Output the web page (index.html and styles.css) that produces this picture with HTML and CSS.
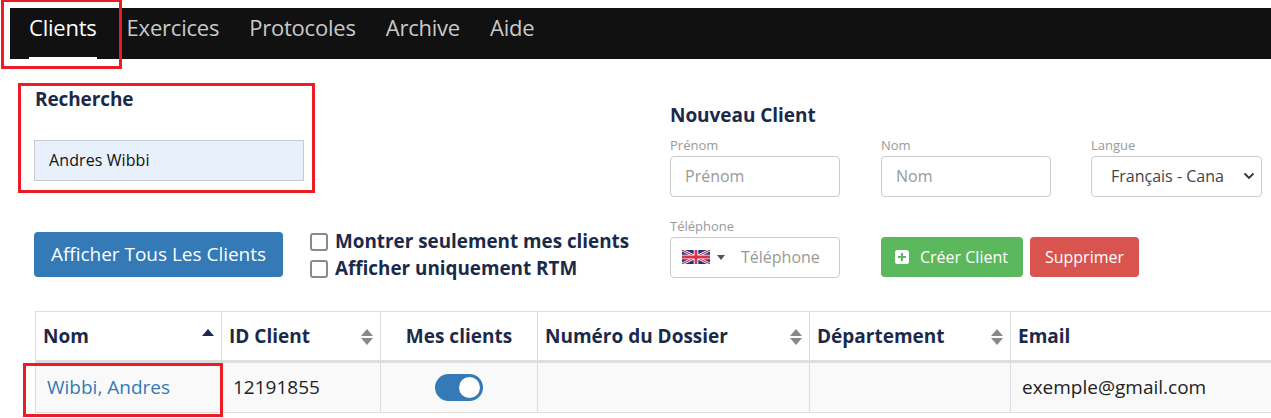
FILE: index.html
```
<!DOCTYPE html>
<html lang="fr">
<head>
<meta charset="utf-8">
<title>Clients</title>
<link rel="stylesheet" href="styles.css">
</head>
<body>
<div class="page">
  <nav class="navbar">
    <a class="nav-item active">Clients</a>
    <a class="nav-item">Exercices</a>
    <a class="nav-item">Protocoles</a>
    <a class="nav-item">Archive</a>
    <a class="nav-item">Aide</a>
  </nav>
  <div class="forms">
    <div class="left">
      <h4 class="search-title">Recherche</h4>
      <input class="search-input" type="text" value="Andres Wibbi">
      <div class="actions">
        <button class="btn btn-blue btn-all">Afficher Tous Les Clients</button>
        <div class="checks">
          <label class="check"><span class="box"></span>Montrer seulement mes clients</label>
          <label class="check"><span class="box"></span>Afficher uniquement RTM</label>
        </div>
      </div>
    </div>
    <div class="right">
      <h4 class="new-title">Nouveau Client</h4>
      <div class="field-row">
        <div class="field">
          <label class="field-label">Prénom</label>
          <input class="text-input" type="text" placeholder="Prénom">
        </div>
        <div class="field">
          <label class="field-label">Nom</label>
          <input class="text-input" type="text" placeholder="Nom">
        </div>
        <div class="field field-lang">
          <label class="field-label">Langue</label>
          <div class="select"><span class="select-text">Français - Cana</span>
            <svg class="chevron" width="12" height="8" viewBox="0 0 12 8"><path d="M1.5 1.5 6 6l4.5-4.5" fill="none" stroke="#333" stroke-width="1.8"/></svg>
          </div>
        </div>
      </div>
      <div class="field-row row-two">
        <div class="field">
          <label class="field-label">Téléphone</label>
          <div class="tel">
            <svg class="flag" width="28" height="14" viewBox="0 0 60 30">
              <rect width="60" height="30" fill="#27337f"/>
              <path d="M0 0 60 30M60 0 0 30" stroke="#fff" stroke-width="6"/>
              <path d="M0 0 60 30M60 0 0 30" stroke="#d8324a" stroke-width="2.5"/>
              <path d="M30 0v30M0 15h60" stroke="#fff" stroke-width="10"/>
              <path d="M30 0v30M0 15h60" stroke="#d8324a" stroke-width="6"/>
            </svg>
            <span class="caret"></span>
            <span class="tel-ph">Téléphone</span>
          </div>
        </div>
        <div class="buttons">
          <button class="btn btn-green">
            <svg width="14" height="14" viewBox="0 0 14 14"><rect width="14" height="14" rx="2.5" fill="#fff"/><path d="M7 3v8M3 7h8" stroke="#5cb85c" stroke-width="2.2"/></svg>
            Créer Client
          </button>
          <button class="btn btn-red">Supprimer</button>
        </div>
      </div>
    </div>
  </div>
  <table class="table">
    <thead>
      <tr>
        <th class="c1">Nom<span class="sort only-up"></span></th>
        <th class="c2">ID Client<span class="sort"></span></th>
        <th class="c3 center">Mes clients</th>
        <th class="c4">Numéro du Dossier<span class="sort"></span></th>
        <th class="c5">Département<span class="sort"></span></th>
        <th class="c6">Email</th>
      </tr>
    </thead>
    <tbody>
      <tr>
        <td class="link">Wibbi, Andres</td>
        <td>12191855</td>
        <td class="center"><span class="toggle"><span class="knob"></span></span></td>
        <td></td>
        <td></td>
        <td>exemple@gmail.com</td>
      </tr>
    </tbody>
  </table>
  <div class="mark mark-nav"></div>
  <div class="mark mark-search"></div>
  <div class="mark mark-row"></div>
</div>
</body>
</html>
```
FILE: styles.css
```
* { box-sizing: border-box; }
html, body { margin: 0; padding: 0; background: #fff; }
body { font-family: "Open Sans", "Noto Sans", sans-serif; color: #1b2a4a; }
.page { position: relative; width: 1271px; height: 418px; overflow: hidden; padding-top: 8px; }

.navbar { display: flex; height: 51px; margin-left: 10px; padding-left: 19px; gap: 30px; background: #111; }
.nav-item { height: 51px; padding-top: 4px; font-size: 22px; line-height: 30px; letter-spacing: -0.22px; color: #c9c9c9; }
.nav-item.active { color: #fff; border-bottom: 2px solid #fff; }

.forms { display: flex; height: 252px; }
.left { width: 670px; padding-left: 34px; }
.search-title { margin: 0; padding-top: 28px; padding-left: 1px; font-size: 19px; line-height: 24px; font-weight: 700; letter-spacing: -0.1px; color: #1b2a4a; }
.search-input { display: block; width: 270px; height: 41px; margin-top: 29px; padding: 0 14px 2px; border: 1px solid #c8ccd2; background: #e8f0fb; font: 16px "Open Sans", sans-serif; color: #111; letter-spacing: 0.1px; outline: 0; }
.actions { display: flex; margin-top: 51px; gap: 27px; }
.btn { border: 1px solid transparent; border-radius: 4px; color: #fff; font-family: "Open Sans", sans-serif; cursor: pointer; }
.btn-blue { width: 249px; height: 45px; padding: 0 0 2px; background: #337ab7; font-size: 19px; letter-spacing: -0.02px; }
.checks { display: flex; flex-direction: column; margin-top: -4px; }
.check { display: flex; align-items: center; height: 27px; font-size: 18.85px; font-weight: 700; line-height: 27px; color: #1b2a4a; }
.box { width: 18px; height: 18px; margin-right: 7px; border: 2px solid #8a8a8a; border-radius: 3px; background: #fff; }

.right { padding-top: 44px; }
.new-title { margin: 0; font-size: 19px; line-height: 24px; font-weight: 700; letter-spacing: -0.05px; color: #1b2a4a; }
.field-row { display: flex; gap: 41px; margin-top: 10px; }
.field { width: 170px; }
.field-lang { margin-left: -1px; }
.field-label { display: block; height: 17px; font-size: 13px; line-height: 17px; color: #9a9a9a; font-weight: 400; }
.text-input { display: block; width: 170px; height: 41px; margin-top: 2px; padding: 0 14px 2px; border: 1px solid #ccc; border-radius: 4px; font: 16px "Open Sans", sans-serif; outline: 0; }
.text-input::placeholder { color: #999; opacity: 1; }
.select { display: flex; align-items: center; justify-content: space-between; width: 171px; height: 41px; margin-top: 2px; padding: 0 6px 2px 19px; border: 1px solid #ccc; border-radius: 4px; font-size: 16px; color: #444; }
.row-two { margin-top: 21px; }
.tel { display: flex; align-items: center; height: 41px; margin-top: 2px; padding: 0 0 1px 11px; border: 1px solid #ccc; border-radius: 4px; }
.flag { flex: none; filter: blur(0.3px); }
.caret { width: 0; height: 0; margin-left: 7px; border: 4px solid transparent; border-top: 5px solid #555; border-bottom: 0; }
.tel-ph { margin-left: 16px; font-size: 16px; color: #999; }
.buttons { display: flex; gap: 7px; padding-top: 19px; }
.btn-green { display: flex; align-items: center; gap: 11px; width: 142px; height: 40px; padding: 0 0 0 13px; background: #5cb85c; font-size: 16px; }
.btn-red { width: 109px; height: 40px; padding: 0; background: #d9534f; font-size: 16px; }

.table { table-layout: fixed; width: 1236px; margin-left: 35px; border-collapse: collapse; border-top: 1px solid #ddd; }
.table th, .table td { border: 1px solid #ddd; }
.table th { position: relative; height: 50px; padding: 0 7px; border-bottom: 3px solid #ddd; font-size: 19px; font-weight: 700; line-height: 24px; text-align: left; color: #1b2a4a; }
.table td { height: 51px; padding: 0 11px 2px; background: #f9f9f9; font-size: 19px; color: #222; }
.table td.link { color: #337ab7; }
.table .center { text-align: center; }
.c1 { width: 186px; } .c2 { width: 159px; } .c3 { width: 157px; } .c4 { width: 272px; } .c5 { width: 201px; } .c6 { width: 261px; }
.sort { position: absolute; right: 7px; top: 17px; width: 0; height: 0; border-left: 6px solid transparent; border-right: 6px solid transparent; border-bottom: 7px solid #888; }
.sort::after { content: ""; position: absolute; left: -6px; top: 9px; border-left: 6px solid transparent; border-right: 6px solid transparent; border-top: 7px solid #888; }
.sort.only-up { top: 17px; border-bottom-color: #1b2a4a; }
.sort.only-up::after { display: none; }
.toggle { display: inline-flex; align-items: center; justify-content: flex-end; vertical-align: middle; width: 48px; height: 27px; padding-right: 3px; border-radius: 14px; background: #337ab7; }
.knob { width: 21px; height: 21px; border-radius: 50%; background: #fff; }

.mark { position: absolute; border: 3px solid #ed1c24; }
.mark-nav { left: 1px; top: -1px; width: 121px; height: 70px; }
.mark-search { left: 18px; top: 83px; width: 297px; height: 110px; }
.mark-row { left: 23px; top: 363px; width: 200px; height: 54px; }
```
